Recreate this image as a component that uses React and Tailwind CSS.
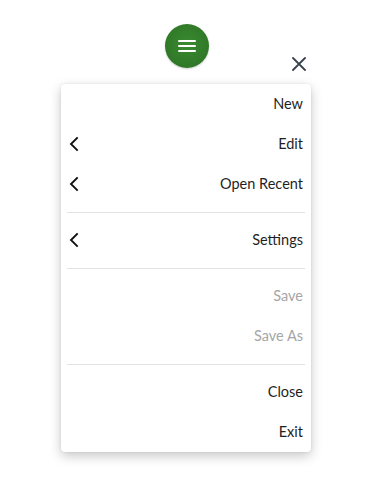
import React from "react";

const Chevron = () => (
  <svg width="10" height="16" viewBox="0 0 10 16" fill="none" stroke="#111" strokeWidth="1.9" strokeLinecap="square">
    <path d="M8 2 L2 8 L8 14" />
  </svg>
);

const Item = ({ label, sub, disabled }) => (
  <div className="h-10 flex items-center pl-2 pr-2">
    <div className="w-4 flex items-center">{sub ? <Chevron /> : null}</div>
    <div className={"ml-auto text-[14.5px] " + (disabled ? "text-[#a6a6a6]" : "text-[#1f1f1f]")}>{label}</div>
  </div>
);

const Divider = () => (
  <div className="h-4 flex items-center px-[6px]">
    <div className="h-px w-full bg-[#e3e3e3]" />
  </div>
);

export default function App() {
  return (
    <div className="w-[365px] h-[503px] bg-white" style={{ fontFamily: "Lato, 'Noto Sans', sans-serif" }}>
      <div className="pl-[61px] w-[311px]">
        <div className="flex h-[84px]">
          <div className="ml-[104px] mt-[24px] w-[44px] h-[44px] rounded-full bg-[radial-gradient(circle_at_50%_45%,#3a8a30,#2b7024)] flex flex-col items-center justify-center gap-[3px] shadow-[0_1px_2px_rgba(0,0,0,0.2)]">
            <div className="w-[18px] h-[2px] bg-white rounded" />
            <div className="w-[18px] h-[2px] bg-white rounded" />
            <div className="w-[18px] h-[2px] bg-white rounded" />
          </div>
          <div className="ml-auto mt-[52px] w-6 h-6 flex items-center justify-center">
            <svg width="14" height="14" viewBox="0 0 14 14" stroke="#394350" strokeWidth="1.8" strokeLinecap="round">
              <path d="M1 1 L13 13 M13 1 L1 13" />
            </svg>
          </div>
        </div>
        <div className="w-[250px] bg-white rounded-[4px] shadow-[0_4px_12px_rgba(0,0,0,0.22),0_0_3px_rgba(0,0,0,0.08)]">
          <Item label="New" />
          <Item label="Edit" sub />
          <Item label="Open Recent" sub />
          <Divider />
          <Item label="Settings" sub />
          <Divider />
          <Item label="Save" disabled />
          <Item label="Save As" disabled />
          <Divider />
          <Item label="Close" />
          <Item label="Exit" />
        </div>
      </div>
    </div>
  );
}
